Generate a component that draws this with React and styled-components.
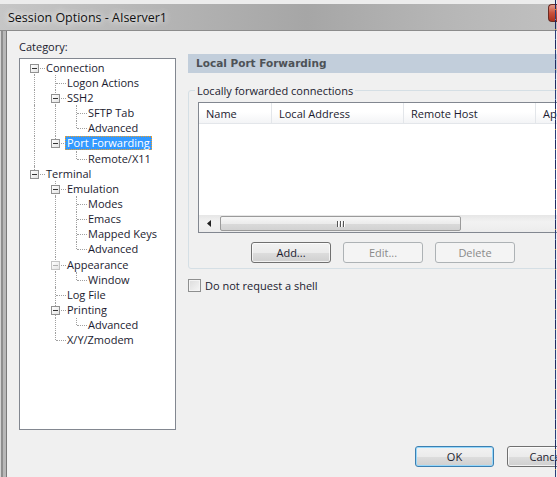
import React from 'react'
import styled, { createGlobalStyle } from 'styled-components'

const GlobalStyle = createGlobalStyle`
  html, body {
    margin: 0;
    padding: 0;
    overflow: hidden;
    background: #f0f0f0;
  }
  * {
    box-sizing: border-box;
  }
`

const ui = `'Open Sans', 'Liberation Sans', sans-serif`

const Window = styled.div`
  position: relative;
  width: 557px;
  height: 477px;
  display: flex;
  flex-direction: column;
  overflow: hidden;
  background: #ececec;
  padding-top: 4px;
  font-family: ${ui};
  font-size: 11px;
  color: #1b1b2f;
`

const TitleBar = styled.div`
  height: 27px;
  flex-shrink: 0;
  display: flex;
  align-items: center;
  padding-left: 8px;
  background: linear-gradient(90deg, #c6c6c6 0%, #b4b4b4 30%, #a6a6a6 55%, #b6b6b6 80%, #c0c0c0 100%);
  border-bottom: 1px solid #8c8c8c;
`

const Title = styled.span`
  font-size: 12.5px;
  color: #111;
  text-shadow: 0 0 6px rgba(255, 255, 255, 0.95), 0 0 10px rgba(255, 255, 255, 0.8);
`

const CloseButton = styled.div`
  margin-left: auto;
  align-self: flex-start;
  width: 9px;
  height: 18px;
  border: 1px solid #6b2b22;
  border-right: none;
  border-radius: 4px 0 0 4px;
  background: linear-gradient(180deg, #e59a8a 0%, #c9503c 50%, #a8301e 100%);
`

const Frame = styled.div`
  flex: 1;
  display: flex;
  min-height: 0;
`

const FrameEdge = styled.div`
  width: 6px;
  flex-shrink: 0;
  background: linear-gradient(90deg, #d4d4d4 0 1px, #8e8e8e 1px 3px, #b8b8b8 3px 6px);
`

const Client = styled.div`
  flex: 1;
  min-width: 0;
  display: flex;
  flex-direction: column;
  overflow: hidden;
  background: #f0f0f0;
  border-left: 1px solid #7a7a7a;
`

const Main = styled.div`
  display: grid;
  grid-template-columns: 157px 430px;
  column-gap: 12px;
  padding: 9px 0 0 12px;
  align-items: start;
`

const LeftColumn = styled.div`
  display: flex;
  flex-direction: column;
`

const FieldLabel = styled.div`
  height: 13px;
  line-height: 13px;
  margin-bottom: 5px;
`

const TreeBox = styled.div`
  height: 372px;
  background: #fff;
  border: 1px solid #828790;
  padding: 1px 0 0 4px;
`

const TreeRow = styled.div`
  display: flex;
  align-items: center;
  height: 15.17px;
`

const Cell = styled.span`
  position: relative;
  width: 21px;
  height: 100%;
  flex-shrink: 0;

  &::before {
    content: '';
    display: ${p => (p.$up || p.$down ? 'block' : 'none')};
    position: absolute;
    left: 10px;
    top: ${p => (p.$up ? '0' : '50%')};
    bottom: ${p => (p.$down ? '0' : '50%')};
    border-left: 1px dotted #a0a0a0;
  }

  &::after {
    content: '';
    display: ${p => (p.$branch ? 'block' : 'none')};
    position: absolute;
    left: 11px;
    right: 0;
    top: 50%;
    border-top: 1px dotted #a0a0a0;
  }
`

const Expander = styled.span`
  position: absolute;
  left: 6px;
  top: 50%;
  margin-top: -4px;
  width: 9px;
  height: 9px;
  z-index: 1;
  border: 1px solid ${p => (p.$faint ? '#c4c4c4' : '#919191')};
  background: linear-gradient(135deg, #ffffff 0%, #e4e4e4 100%);

  &::after {
    content: '';
    position: absolute;
    left: 1px;
    right: 1px;
    top: 3px;
    height: 1px;
    background: ${p => (p.$faint ? '#b0b0b0' : '#333')};
  }
`

const NodeLabel = styled.span`
  margin-left: -1px;
  padding: 0 1px;
  height: 14px;
  line-height: 12px;
  white-space: nowrap;
  border: 1px dotted ${p => (p.$selected ? '#f4a020' : 'transparent')};
  background: ${p => (p.$selected ? '#3399ff' : 'transparent')};
  color: ${p => (p.$selected ? '#fff' : '#1b1b2f')};
`

const RightColumn = styled.div`
  margin-top: 14px;
  display: flex;
  flex-direction: column;
`

const SectionHeader = styled.div`
  height: 19px;
  line-height: 19px;
  padding-left: 8px;
  background: #c2cedb;
  font-family: 'DejaVu Sans', sans-serif;
  font-weight: bold;
  font-size: 10.5px;
  color: #4e5257;
`

const GroupBox = styled.fieldset`
  margin: 11px 0 0 0;
  padding: 5px 0 5px 9px;
  min-width: 0;
  border: 1px solid #d5dfe5;
  border-radius: 3px;
`

const Legend = styled.legend`
  margin-left: -3px;
  padding: 0 2px;
  line-height: 13px;
  font-size: 11px;
`

const ListView = styled.div`
  width: 410px;
  height: 131px;
  border: 1px solid #828790;
  background: #fff;
  display: flex;
  flex-direction: column;
`

const HeaderRow = styled.div`
  display: flex;
  height: 21px;
  flex-shrink: 0;
  background: linear-gradient(180deg, #ffffff 0%, #ffffff 45%, #f3f4f6 100%);
  border-bottom: 1px solid #e3e6ea;
`

const HeaderCell = styled.div`
  width: ${p => p.$width}px;
  flex-shrink: 0;
  padding-left: 7px;
  line-height: 21px;
  white-space: nowrap;
  overflow: hidden;
  border-right: 1px solid #e3e6ea;
`

const ListBody = styled.div`
  flex: 1;
`

const HScroll = styled.div`
  height: 17px;
  flex-shrink: 0;
  display: flex;
  align-items: center;
  background: linear-gradient(180deg, #e6e6e6 0%, #f2f2f2 40%, #ececec 100%);
`

const ArrowButton = styled.div`
  width: 20px;
  height: 100%;
  display: flex;
  align-items: center;
  justify-content: center;
`

const Thumb = styled.div`
  width: 241px;
  height: 15px;
  margin-left: 1px;
  display: flex;
  align-items: center;
  justify-content: center;
  gap: 1px;
  border: 1px solid #9a9a9a;
  border-radius: 2px;
  background: linear-gradient(180deg, #f7f7f7 0%, #ececec 50%, #dadada 51%, #d2d2d2 100%);
`

const Grip = styled.span`
  width: 1px;
  height: 6px;
  background: #555;
  box-shadow: 1px 0 0 #fff;
  margin-right: 1px;
`

const ButtonRow = styled.div`
  display: flex;
  gap: 12px;
  margin-top: 9px;
  padding-left: 53px;
`

const Button = styled.button`
  width: ${p => p.$width || 80}px;
  height: 21px;
  flex-shrink: 0;
  padding: 0;
  font-family: ${ui};
  font-size: 11px;
  border-radius: 3px;
  border: 1px solid ${p => (p.$disabled ? '#adb2b5' : p.$default ? '#3c7fb1' : '#707070')};
  color: ${p => (p.$disabled ? '#8a8a8a' : '#1b1b2f')};
  background: ${p =>
    p.$disabled
      ? '#f4f4f4'
      : 'linear-gradient(180deg, #f2f2f2 0%, #ebebeb 50%, #dddddd 51%, #cfcfcf 100%)'};
  box-shadow: ${p =>
    p.$default ? 'inset 0 0 0 1px #97d8fb' : p.$disabled ? 'none' : 'inset 0 0 0 1px rgba(255,255,255,0.7)'};
`

const CheckRow = styled.label`
  display: flex;
  align-items: center;
  gap: 4px;
  margin-top: 10px;
  height: 13px;
`

const CheckBox = styled.span`
  width: 13px;
  height: 13px;
  border: 1px solid #8e8f8f;
  background: linear-gradient(135deg, #dcdcdc 0%, #f6f6f6 100%);
  box-shadow: inset 0 0 0 1px #f4f4f4;
`

const Footer = styled.div`
  margin-top: auto;
  display: flex;
  gap: 13px;
  padding: 0 0 10px 408px;
`

const EdgeLine = styled.div`
  position: absolute;
  top: 0;
  bottom: 0;
  right: 1px;
  width: 1px;
  background: repeating-linear-gradient(180deg, #1f2a63 0 9px, #c89b3c 9px 10px, #2a3d7a 10px 19px, #6a8fb0 19px 20px);
`

const tree = [
  {
    label: 'Connection',
    children: [
      { label: 'Logon Actions' },
      { label: 'SSH2', children: [{ label: 'SFTP Tab' }, { label: 'Advanced' }] },
      { label: 'Port Forwarding', selected: true, children: [{ label: 'Remote/X11' }] },
    ],
  },
  {
    label: 'Terminal',
    children: [
      {
        label: 'Emulation',
        children: [{ label: 'Modes' }, { label: 'Emacs' }, { label: 'Mapped Keys' }, { label: 'Advanced' }],
      },
      { label: 'Appearance', faint: true, children: [{ label: 'Window' }] },
      { label: 'Log File' },
      { label: 'Printing', children: [{ label: 'Advanced' }] },
      { label: 'X/Y/Zmodem' },
    ],
  },
]

const flatten = (nodes, depth = 0, trail = [], out = []) => {
  nodes.forEach((node, i) => {
    const isLast = i === nodes.length - 1
    out.push({
      ...node,
      depth,
      trail,
      up: !(depth === 0 && i === 0),
      down: !isLast,
    })
    if (node.children) flatten(node.children, depth + 1, [...trail, !isLast], out)
  })
  return out
}

const rows = flatten(tree)

const columns = [
  { name: 'Name', width: 73 },
  { name: 'Local Address', width: 132 },
  { name: 'Remote Host', width: 132 },
  { name: 'Ap', width: 120 },
]

const TreeItem = ({ row }) => (
  <TreeRow>
    {row.trail.map((through, i) => (
      <Cell key={i} $up={through} $down={through} />
    ))}
    <Cell $up={row.up} $down={row.down} $branch>
      {row.children && <Expander $faint={row.faint} />}
    </Cell>
    <NodeLabel $selected={row.selected}>{row.label}</NodeLabel>
  </TreeRow>
)

const App = () => {
  return (
    <Window>
      <GlobalStyle />
      <TitleBar>
        <Title>Session Options - AIserver1</Title>
        <CloseButton />
      </TitleBar>
      <Frame>
        <FrameEdge />
        <Client>
          <Main>
            <LeftColumn>
              <FieldLabel>Category:</FieldLabel>
              <TreeBox>
                {rows.map((row, i) => (
                  <TreeItem key={i} row={row} />
                ))}
              </TreeBox>
            </LeftColumn>
            <RightColumn>
              <SectionHeader>Local Port Forwarding</SectionHeader>
              <GroupBox>
                <Legend>Locally forwarded connections</Legend>
                <ListView>
                  <HeaderRow>
                    {columns.map(c => (
                      <HeaderCell key={c.name} $width={c.width}>{c.name}</HeaderCell>
                    ))}
                  </HeaderRow>
                  <ListBody />
                  <HScroll>
                    <ArrowButton>
                      <svg width="4" height="7" viewBox="0 0 4 7">
                        <path d="M4 0 L0 3.5 L4 7 Z" fill="#222" />
                      </svg>
                    </ArrowButton>
                    <Thumb>
                      <Grip />
                      <Grip />
                      <Grip />
                    </Thumb>
                  </HScroll>
                </ListView>
                <ButtonRow>
                  <Button>Add...</Button>
                  <Button $disabled>Edit...</Button>
                  <Button $disabled>Delete</Button>
                </ButtonRow>
              </GroupBox>
              <CheckRow>
                <CheckBox />
                Do not request a shell
              </CheckRow>
            </RightColumn>
          </Main>
          <Footer>
            <Button $width={79} $default>OK</Button>
            <Button $width={79}>Cancel</Button>
          </Footer>
        </Client>
      </Frame>
      <EdgeLine />
    </Window>
  )
}

export default App
